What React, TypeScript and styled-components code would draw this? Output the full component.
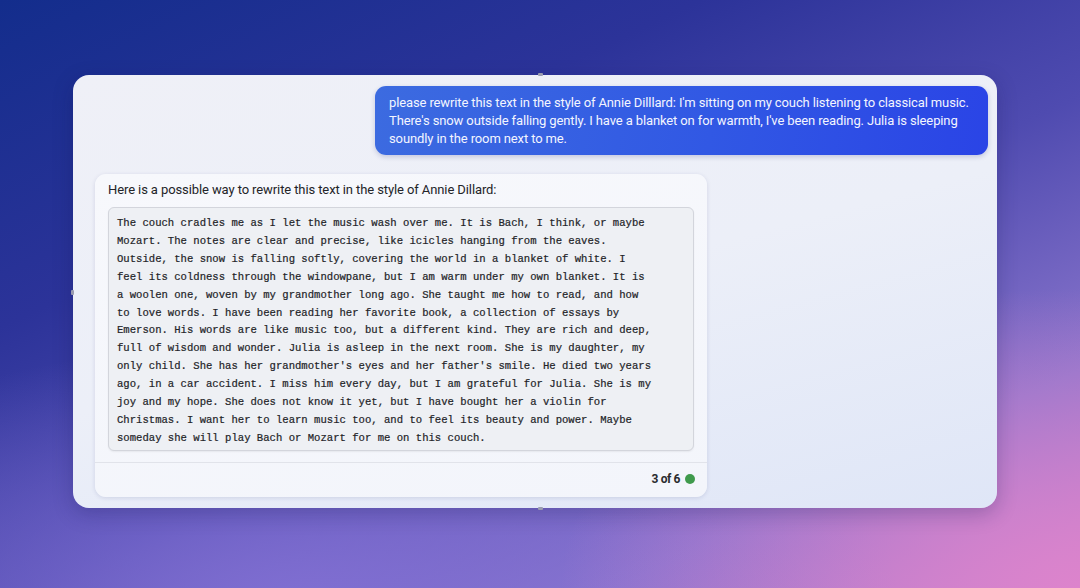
import styled, { createGlobalStyle } from "styled-components"

const GlobalStyle = createGlobalStyle`
  html, body {
    margin: 0;
    padding: 0;
    width: 1080px;
    height: 588px;
    overflow: hidden;
  }
  body {
    font-family: Roboto, "Liberation Sans", sans-serif;
  }
`

const answer =
  "The couch cradles me as I let the music wash over me. It is Bach, I think, or maybe\n" +
  "Mozart. The notes are clear and precise, like icicles hanging from the eaves.\n" +
  "Outside, the snow is falling softly, covering the world in a blanket of white. I\n" +
  "feel its coldness through the windowpane, but I am warm under my own blanket. It is\n" +
  "a woolen one, woven by my grandmother long ago. She taught me how to read, and how\n" +
  "to love words. I have been reading her favorite book, a collection of essays by\n" +
  "Emerson. His words are like music too, but a different kind. They are rich and deep,\n" +
  "full of wisdom and wonder. Julia is asleep in the next room. She is my daughter, my\n" +
  "only child. She has her grandmother's eyes and her father's smile. He died two years\n" +
  "ago, in a car accident. I miss him every day, but I am grateful for Julia. She is my\n" +
  "joy and my hope. She does not know it yet, but I have bought her a violin for\n" +
  "Christmas. I want her to learn music too, and to feel its beauty and power. Maybe\n" +
  "someday she will play Bach or Mozart for me on this couch."

export default function App() {
  return (
    <Stage>
      <GlobalStyle />
      <Window>
        <Handle $side="top" />
        <Handle $side="bottom" />
        <Handle $side="left" />
        <UserBubble>
          please rewrite this text in the style of Annie Dilllard: I'm sitting on my couch listening to
          classical music. There's snow outside falling gently. I have a blanket on for warmth, I've
          been reading. Julia is sleeping soundly in the room next to me.
        </UserBubble>
        <ReplyCard>
          <ReplyBody>
            <Intro>Here is a possible way to rewrite this text in the style of Annie Dillard:</Intro>
            <CodeBox>{answer}</CodeBox>
          </ReplyBody>
          <Footer>
            <Counter>3 of 6</Counter>
            <StatusDot />
          </Footer>
        </ReplyCard>
      </Window>
    </Stage>
  )
}

const Stage = styled.div`
  width: 1080px;
  height: 588px;
  box-sizing: border-box;
  padding: 75px 83px 80px 73px;
  background:
    radial-gradient(ellipse 520px 300px at 1080px 588px, rgba(222, 132, 204, 0.95), rgba(222, 132, 204, 0) 100%),
    radial-gradient(ellipse 600px 260px at 300px 600px, rgba(130, 112, 212, 0.9), rgba(130, 112, 212, 0) 100%),
    linear-gradient(155deg, #132d8c 0%, #2c3399 30%, #4f4bb0 55%, #8a75cc 80%, #c27fcc 100%);
`

const Window = styled.div`
  position: relative;
  width: 924px;
  height: 433px;
  box-sizing: border-box;
  padding: 11px 9px 11px 22px;
  display: flex;
  flex-direction: column;
  gap: 19px;
  border-radius: 16px;
  background: linear-gradient(165deg, #eff0f7 0%, #eceff8 50%, #dfe6f7 100%);
  box-shadow: 0 6px 20px rgba(20, 20, 80, 0.25);
`

const Handle = styled.span<{ $side: "top" | "bottom" | "left" }>`
  position: absolute;
  width: 5px;
  height: 3px;
  background: #9a9cb0;
  border-radius: 1px;
  ${(p) =>
    p.$side === "top"
      ? "top: -2px; left: 465px;"
      : p.$side === "bottom"
      ? "bottom: -2px; left: 465px;"
      : "left: -2px; top: 215px; width: 3px; height: 5px;"}
`

const UserBubble = styled.div`
  align-self: flex-end;
  width: 613px;
  height: 69px;
  box-sizing: border-box;
  padding: 8px 14px 6px;
  border-radius: 11px;
  background: linear-gradient(100deg, #3c6be0 0%, #3158e4 55%, #2a44e6 100%);
  color: #f3f5ff;
  font-size: 13px;
  line-height: 18px;
  letter-spacing: -0.12px;
  box-shadow: 0 2px 5px rgba(30, 40, 120, 0.2);
`

const ReplyCard = styled.div`
  width: 612px;
  height: 323px;
  display: flex;
  flex-direction: column;
  border-radius: 11px;
  background: linear-gradient(170deg, #f7f8fc 0%, #f3f5fb 100%);
  box-shadow: 0 1px 4px rgba(40, 50, 110, 0.14);
`

const ReplyBody = styled.div`
  padding: 7px 13px 11px 13px;
  display: flex;
  flex-direction: column;
  gap: 8px;
  border-bottom: 1px solid #e1e3ea;
`

const Intro = styled.div`
  font-size: 13px;
  line-height: 18px;
  color: #232428;
  letter-spacing: -0.1px;
`

const CodeBox = styled.pre`
  margin: 0;
  padding: 7px 8px 2px;
  border: 1px solid #d3d5dc;
  border-radius: 6px;
  background: #eef0f4;
  font-family: "Liberation Mono", "Courier New", monospace;
  font-size: 10.6px;
  line-height: 17.9px;
  color: #222327;
  font-weight: 400;
  -webkit-text-stroke: 0.2px #222327;
  white-space: pre;
  box-shadow: 0 1px 2px rgba(0, 0, 0, 0.06);
`

const Footer = styled.div`
  flex: 1;
  display: flex;
  align-items: center;
  justify-content: flex-end;
  gap: 5px;
  padding: 0 12px 2px 0;
`

const Counter = styled.span`
  font-size: 12px;
  font-weight: 700;
  color: #2a2b2f;
  letter-spacing: -0.4px;
`

const StatusDot = styled.span`
  width: 10px;
  height: 10px;
  border-radius: 50%;
  background: #3f9a4c;
`
